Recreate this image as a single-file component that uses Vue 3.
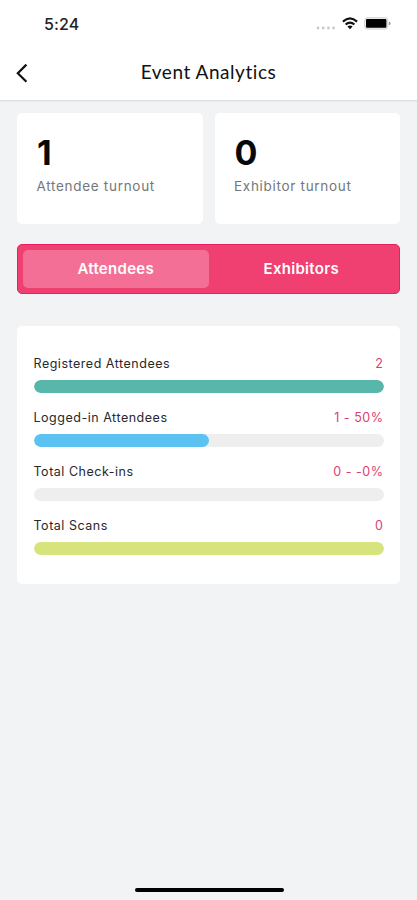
<script setup>
const totals = [
  { value: '1', label: 'Attendee turnout' },
  { value: '0', label: 'Exhibitor turnout' },
]
const metrics = [
  { label: 'Registered Attendees', value: '2', percent: 100, color: '#59b6aa' },
  { label: 'Logged-in Attendees', value: '1 - 50%', percent: 50, color: '#5bc2f1' },
  { label: 'Total Check-ins', value: '0 - -0%', percent: 0, color: '#59b6aa' },
  { label: 'Total Scans', value: '0', percent: 100, color: '#d7e37d' },
]
</script>

<template>
  <div class="screen">
    <header class="header">
      <div class="status">
        <span class="time">5:24</span>
        <div class="indicators">
          <svg class="dots" width="20" height="4" viewBox="0 0 20 4" fill="#c8c8c8">
            <circle cx="2" cy="2" r="1.4" /><circle cx="7.2" cy="2" r="1.4" />
            <circle cx="12.4" cy="2" r="1.4" /><circle cx="17.6" cy="2" r="1.4" />
          </svg>
          <svg class="wifi" width="16" height="13" viewBox="0 0 16 13" fill="none" stroke="#111" stroke-width="2.1">
            <path d="M.9 4.6Q8-1.8 15.1 4.6" />
            <path d="M3.6 7.5Q8 3.6 12.4 7.5" />
            <path d="M8 12.2 5.4 9.6Q8 7.6 10.6 9.6Z" fill="#111" stroke="none" />
          </svg>
          <svg class="battery" width="27" height="13" viewBox="0 0 27 13">
            <rect x=".7" y=".7" width="23" height="11.4" rx="2.6" fill="#eee" stroke="#d2d2d2" />
            <rect x="2" y="2" width="20.4" height="8.8" rx="1" fill="#000" />
            <path d="M24.8 4.4Q26.6 5 26.6 6.4T24.8 8.4Z" fill="#999" />
          </svg>
        </div>
      </div>
      <div class="nav">
        <svg class="back" width="12" height="20" viewBox="0 0 12 20" fill="none" stroke="#111" stroke-width="2.2">
          <path d="M10.4 1.6 1.8 10.2l8.6 8.6" />
        </svg>
        <h1>Event Analytics</h1>
      </div>
    </header>

    <main>
      <section class="totals">
        <article v-for="item in totals" :key="item.label" class="total">
          <strong>{{ item.value }}</strong>
          <span>{{ item.label }}</span>
        </article>
      </section>

      <div class="tabs">
        <button class="tab active">Attendees</button>
        <button class="tab">Exhibitors</button>
      </div>

      <section class="metrics">
        <div v-for="item in metrics" :key="item.label" class="metric">
          <div class="row">
            <span>{{ item.label }}</span>
            <span class="value">{{ item.value }}</span>
          </div>
          <div class="track">
            <div class="fill" :style="{ width: item.percent + '%', background: item.color }"></div>
          </div>
        </div>
      </section>
    </main>
    <div class="home"></div>
  </div>
</template>

<style>
body { background: #f1f3f5; }
</style>

<style scoped>
.screen {
  box-sizing: border-box;
  height: 900px;
  display: flex;
  flex-direction: column;
  background: #f1f3f5;
  font-family: Inter, "Liberation Sans", sans-serif;
  color: #111;
}
.header {
  box-sizing: border-box;
  height: 101px;
  flex: none;
  background: #fff;
  border-bottom: 1px solid #dcdee0;
  box-shadow: 0 1px 1px #e9ebec;
}
.status {
  height: 48px;
  display: flex;
  justify-content: space-between;
  padding: 0 26px 0 44px;
}
.time { font-size: 16px; font-weight: 500; line-height: 48px; letter-spacing: .1px; color: #222; }
.indicators { display: flex; align-items: flex-start; padding-top: 17px; }
.dots { margin: 9px 6px 0 0; }
.wifi { margin-right: 6px; }
.nav { height: 50px; display: grid; grid-template-columns: 60px 1fr 60px; align-items: center; }
.back { margin-left: 16px; }
h1 {
  margin: 0 0 2px;
  text-align: center;
  font: 400 19px/48px Lato, sans-serif;
  letter-spacing: .55px;
}
main { padding: 12px 17px 0; }
.totals { display: grid; grid-template-columns: 1fr 1fr; gap: 12px; }
.total {
  box-sizing: border-box;
  height: 111px;
  padding: 20px 19px;
  display: flex;
  flex-direction: column;
  background: #fff;
  border-radius: 5px;
}
.total strong { padding-left: 1px; font-size: 34px; line-height: 40px; font-weight: 700; color: #080808; }
.total span { margin-top: 3px; padding-left: .5px; font-size: 13.5px; line-height: 20px; letter-spacing: .7px; color: #74777a; }
.tabs {
  box-sizing: border-box;
  height: 50px;
  margin-top: 20px;
  padding: 5px;
  display: grid;
  grid-template-columns: 1fr 1fr;
  border: 1px solid #e91e63;
  border-radius: 5px;
  background: #ef4071;
}
.tab {
  border: 0;
  padding: 0 0 1px;
  border-radius: 5px;
  background: transparent;
  color: #fff;
  font: 600 15px/20px Inter, sans-serif;
  letter-spacing: .3px;
}
.active { background: #f36f95; }
.metrics {
  box-sizing: border-box;
  height: 258px;
  margin-top: 32px;
  padding: 28px 16.5px;
  display: flex;
  flex-direction: column;
  gap: 14px;
  background: #fff;
  border-radius: 5px;
}
.metric { height: 40px; flex: none; }
.row {
  height: 26px;
  display: flex;
  justify-content: space-between;
  font-size: 12.5px;
  line-height: 19px;
  letter-spacing: .52px;
  color: #27292c;
}
.value { color: #df3d70; }
.track { height: 12.8px; border-radius: 7px; background: #eee; overflow: hidden; }
.fill { height: 100%; border-radius: 7px; }
.home { width: 149px; height: 4px; margin: auto 133px 8px 135px; border-radius: 2px; background: #000; }
</style>
